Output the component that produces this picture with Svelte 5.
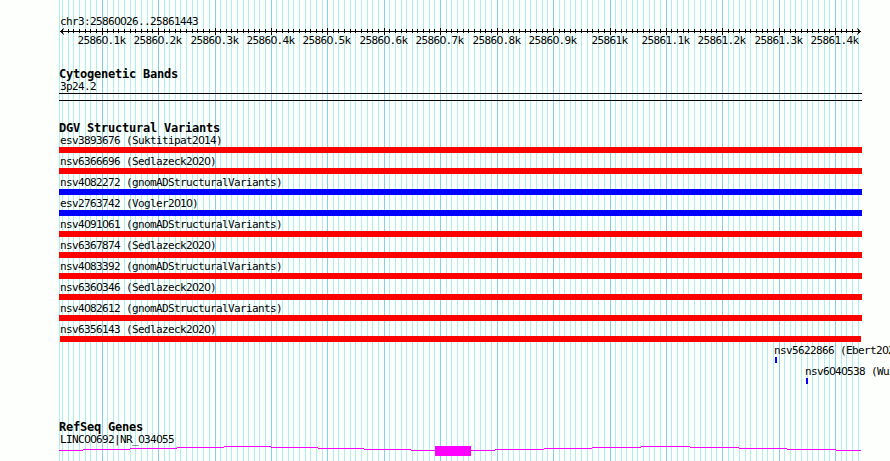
<script lang="ts">
	type Feature = { name: string; color: string; left?: number; inset?: number; width?: number };

	const SCALE = 0.5642;

	function toX(pos: number) {
		const origin = pos % 100 === 0 ? 60.5 : 60.25;
		return Math.floor(origin + (pos - 26) * SCALE);
	}

	const ticks = Array.from({ length: 142 }, (_, i) => {
		const pos = 30 + i * 10;
		return { pos, x: toX(pos), major: pos % 100 === 0 };
	});

	const majors = ticks.filter((t) => t.major);

	function tickLabel(pos: number) {
		const tenths = 258600 + pos / 100;
		return tenths % 10 === 0 ? `${tenths / 10}k` : `${(tenths / 10).toFixed(1)}k`;
	}

	const variants: Feature[] = [
		{ name: 'esv3893676 (Suktitipat2014)', color: 'red' },
		{ name: 'nsv6366696 (Sedlazeck2020)', color: 'red' },
		{ name: 'nsv4082272 (gnomADStructuralVariants)', color: 'blue' },
		{ name: 'esv2763742 (Vogler2010)', color: 'blue' },
		{ name: 'nsv4091061 (gnomADStructuralVariants)', color: 'red' },
		{ name: 'nsv6367874 (Sedlazeck2020)', color: 'red' },
		{ name: 'nsv4083392 (gnomADStructuralVariants)', color: 'red' },
		{ name: 'nsv6360346 (Sedlazeck2020)', color: 'red' },
		{ name: 'nsv4082612 (gnomADStructuralVariants)', color: 'red' },
		{ name: 'nsv6356143 (Sedlazeck2020)', color: 'red', inset: 1, width: 801 },
		{ name: 'nsv5622866 (Ebert2020)', color: 'blue', left: 714, inset: 2, width: 2 },
		{ name: 'nsv6040538 (Wu2021)', color: 'blue', left: 745, inset: 2, width: 2 }
	];

	// intron line as [start, end, y] steps
	const intron = [
		[59, 83, 6], [83, 130, 5], [130, 177, 4], [177, 224, 3], [224, 271, 2], [271, 318, 3],
		[318, 364, 4], [364, 411, 5], [411, 435, 6], [471, 495, 6], [495, 544, 5], [544, 592, 4],
		[592, 641, 3], [641, 690, 2], [690, 739, 3], [739, 787, 4], [787, 836, 5], [836, 861, 6]
	];
</script>

{#snippet mono(text: string)}
	{#each text.split(/(0+)/) as part}{#if part[0] === '0'}<span class="zero">{part}</span>{:else}{part}{/if}{/each}
{/snippet}

<div class="browser">
	<svg class="grid" width="890" height="461" shape-rendering="crispEdges" aria-hidden="true">
		<rect x="59" y="0" width="1" height="461" fill="#afeeee" />
		{#each ticks as t}
			<rect x={t.x} y="0" width="1" height="461" fill={t.major ? '#87ceeb' : '#afeeee'} />
		{/each}
	</svg>

	<div class="panel">
		<section class="ruler">
			<div class="label">{@render mono('chr3:25860026..25861443')}</div>
			<svg class="axis" width="831" height="24" viewBox="59 26 831 24">
				<g shape-rendering="crispEdges">
					<rect x="60" y="31" width="801" height="1" />
					{#each ticks as t}
						<rect x={t.x} y={t.major ? 28 : 29} width="1" height={t.major ? 7 : 4} />
					{/each}
				</g>
				<path d="M64 28.5L60.5 31.5L64 34.5M857 28.5L860.5 31.5L857 34.5" fill="none" stroke="#000" />
				{#each majors as t}
					{@const text = tickLabel(t.pos)}
					<text y="44" x={[...text].map((_, i) => t.x - text.length * 3 - 0.5 + i * 6).join(' ')}>{#each text.split(/(0)/) as part}{#if part === '0'}<tspan class="svg-zero">{part}</tspan>{:else}{part}{/if}{/each}</text>
				{/each}
			</svg>
		</section>

		<section class="bands">
			<h2>Cytogenetic Bands</h2>
			<div class="label">{@render mono('3p24.2')}</div>
			<div class="band"></div>
		</section>

		<section class="variants">
			<h2>DGV Structural Variants</h2>
			{#each variants as v}
				<div class="feature" style:padding-left="{v.left ?? 0}px">
					<div class="label">{@render mono(v.name)}</div>
					<div
						class="bar"
						style:background={v.color}
						style:margin-left="{v.inset ?? 0}px"
						style:width="{v.width ?? 803}px"
					></div>
				</div>
			{/each}
		</section>

		<section class="genes">
			<h2>RefSeq Genes</h2>
			<div class="label">{@render mono('LINC00692|NR_034055')}</div>
			<svg class="gene" width="831" height="16" viewBox="59 0 831 16" shape-rendering="crispEdges">
				{#each intron as [x1, x2, y]}
					<rect x={x1} {y} width={x2 - x1} height="1" />
				{/each}
				<rect x="435" y="2" width="36" height="10" />
			</svg>
		</section>
	</div>
</div>

<style>
	:global(body) {
		background: #fdfffc;
	}

	.browser {
		position: relative;
		width: 890px;
		height: 461px;
		overflow: hidden;
		color: #000;
		font-family: 'DejaVu Sans Mono', monospace;
		font-size: 11px;
	}

	.grid {
		position: absolute;
		inset: 0;
	}

	.panel {
		position: relative;
		display: flex;
		flex-direction: column;
		padding: 14px 0 0 59px;
	}

	.label {
		height: 12px;
		padding-left: 1px;
		line-height: 16px;
		letter-spacing: -0.622px;
		white-space: nowrap;
	}

	/* the proportional face has an open zero */
	.zero {
		font-family: 'DejaVu Sans', sans-serif;
		letter-spacing: -1px;
	}

	.svg-zero {
		font-family: 'DejaVu Sans', sans-serif;
	}

	h2 {
		height: 12px;
		margin: 0;
		font-size: 12px;
		font-weight: 700;
		line-height: 15px;
		letter-spacing: -0.224px;
		white-space: nowrap;
	}

	.axis,
	.gene {
		display: block;
	}

	.bands {
		padding-top: 17px;
	}

	.band {
		box-sizing: border-box;
		width: 803px;
		height: 8px;
		margin-top: 2px;
		border: solid #000;
		border-width: 1px 0;
	}

	.variants {
		padding-top: 20px;
	}

	.feature {
		height: 21px;
	}

	.bar {
		height: 6px;
		margin-top: 2px;
	}

	.genes {
		padding-top: 35px;
	}

	.gene {
		fill: #f0f;
	}
</style>
